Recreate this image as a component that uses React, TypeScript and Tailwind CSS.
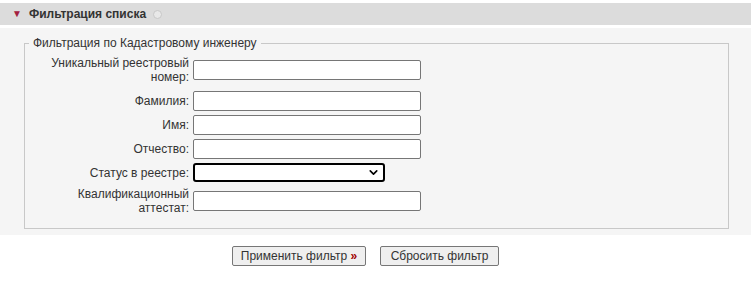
import { ChevronDown } from 'lucide-react';

const font = { fontFamily: '"Liberation Sans", Arial, sans-serif' };

function Row({ label, children, className = '' }: { label: React.ReactNode; children: React.ReactNode; className?: string }) {
  return (
    <div className={`flex items-center ${className}`}>
      <div className="w-[167px] pr-[3px] text-right text-[12px] leading-[14px] text-[#333]">{label}</div>
      <div className="ml-[1px]">{children}</div>
    </div>
  );
}

function TextInput() {
  return <input type="text" className="block h-[20px] w-[228px] rounded-[2px] border border-[#767676] bg-white" />;
}

export default function App() {
  return (
    <div className="w-[751px] h-[308px] bg-white pt-[3px]" style={font}>
      {/* заголовок */}
      <div className="flex h-[22px] items-center bg-[#dcdcdc] pl-[12px]">
        <span className="text-[10px] leading-none text-[#a3203f]">▼</span>
        <span className="ml-[7px] text-[12px] font-bold text-[#333]">Фильтрация списка</span>
        <span className="ml-[7px] h-[9px] w-[9px] rounded-full border border-[#c8c8c8] bg-[#e8e8e8]" />
      </div>

      <div className="mt-[3px] h-[207px] bg-[#f5f5f5] pt-[8px] pl-[24px] pr-[22px]">
        <fieldset className="m-0 h-[193px] border border-[#c8c8c8] p-0">
          <legend className="ml-[4px] px-[4px] text-[12px] leading-[14px] text-[#333]">Фильтрация по Кадастровому инженеру</legend>
          <div className="flex flex-col pt-[6px]">
            <Row label={<>Уникальный реестровый<br />номер:</>} className="h-[28px]">
              <TextInput />
            </Row>
            <Row label="Фамилия:" className="mt-[7px]"><TextInput /></Row>
            <Row label="Имя:" className="mt-[4px]"><TextInput /></Row>
            <Row label="Отчество:" className="mt-[4px]"><TextInput /></Row>
            <Row label="Статус в реестре:" className="mt-[4px]">
              <div className="flex h-[19px] w-[192px] items-center justify-end rounded-[3px] border-2 border-black bg-white pr-[3px]">
                <ChevronDown size={13} strokeWidth={3} className="text-black" />
              </div>
            </Row>
            <Row label={<>Квалификационный<br />аттестат:</>} className="mt-[5px] h-[28px]">
              <TextInput />
            </Row>
          </div>
        </fieldset>
      </div>

      <div className="mt-[11px] flex justify-center gap-[14px] pr-[20px]">
        <button className="h-[20px] w-[134px] rounded-[2px] border border-[#767676] bg-[#efefef] text-[12px] text-[#333]">
          Применить фильтр <span className="font-bold text-[#a00000]">»</span>
        </button>
        <button className="h-[20px] w-[119px] rounded-[2px] border border-[#767676] bg-[#efefef] text-[12px] text-[#333]">
          Сбросить фильтр
        </button>
      </div>
    </div>
  );
}
